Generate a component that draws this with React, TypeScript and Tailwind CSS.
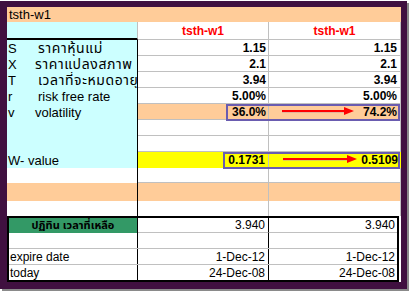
const font = { fontFamily: '"Liberation Sans", "Noto Sans Thai", "Noto Sans", Arial, sans-serif' };

type DataRow = { k: string; label: string; b: string; c: string; bg?: string; pad?: string; thai?: boolean };

const rows: DataRow[] = [
  { k: 'S', label: 'ราคาหุ้นแม่', b: '1.15', c: '1.15', pad: 'pl-[9px]', thai: true },
  { k: 'X', label: 'ราคาแปลงสภาพ', b: '2.1', c: '2.1', pad: 'pl-[6px]', thai: true },
  { k: 'T', label: 'เวลาที่จะหมดอายุ', b: '3.94', c: '3.94', pad: 'pl-[9px]', thai: true },
  { k: 'r', label: 'risk free rate', b: '5.00%', c: '5.00%', pad: 'pl-[9px]' },
  { k: 'v', label: 'volatility', b: '36.0%', c: '74.2%', bg: 'bg-[#ffcc99]', pad: 'pl-[6px]' },
  { k: '', label: '', b: '', c: '' },
  { k: '', label: '', b: '', c: '' },
];

function Arrow({ x1, x2, y }: { x1: number; x2: number; y: number }) {
  return (
    <svg className="absolute left-0 top-0 pointer-events-none" width={394} height={275}>
      <line x1={x1} y1={y + 1} x2={x2 - 8} y2={y + 1} stroke="#c9a0a0" strokeWidth={2} opacity={0.5} />
      <line x1={x1} y1={y} x2={x2 - 8} y2={y} stroke="#ff0000" strokeWidth={2} />
      <polygon points={`${x2 - 10},${y - 4} ${x2},${y} ${x2 - 10},${y + 4}`} fill="#ff0000" />
    </svg>
  );
}

export default function App() {
  return (
    <div className="w-[409px] h-[291px] bg-white overflow-hidden" style={font}>
      <div className="mt-[1px] w-[407px] h-[288px] bg-[#401040] pl-[7px] pt-[6px] shadow-[2px_2px_0_#8a8a8a]">
        <div className="relative w-[394px] h-[275px] bg-white text-black">
          {/* title */}
          <div className="h-[15px] bg-[#ffcc99] flex items-center pl-[2px] text-[13px] leading-none">tsth-w1</div>

          {/* header */}
          <div className="h-[18px] flex">
            <div className="w-[131px] bg-[#ccffff] border-b-2 border-b-black border-r border-r-[#c0c0c0]" />
            <div className="w-[131px] flex items-center justify-center border-r border-b border-[#c0c0c0] text-[12px] font-bold text-[#ff0000]">tsth-w1</div>
            <div className="w-[132px] flex items-center justify-center border-r border-b border-[#c0c0c0] text-[12px] font-bold text-[#ff0000]">tsth-w1</div>
          </div>

          {rows.map((r, i) => (
            <div key={i} className="h-[16px] flex">
              <div className="w-[131px] bg-[#ccffff] border-r border-black flex items-center text-[13px] leading-none whitespace-nowrap overflow-hidden">
                <span className="w-[22px] shrink-0 pl-[1px]">{r.k}</span>
                <span className={`${r.pad ?? ''} ${r.thai ? 'text-[14px] tracking-[0.6px]' : ''}`}>{r.label}</span>
              </div>
              <div className={`w-[131px] flex items-center justify-end pr-[2px] border-r border-b border-[#c0c0c0] text-[12px] font-bold ${r.bg ?? ''}`}>{r.b}</div>
              <div className={`w-[132px] flex items-center justify-end pr-[3px] border-r border-b border-[#c0c0c0] text-[12px] font-bold ${r.bg ?? ''}`}>{r.c}</div>
            </div>
          ))}

          {/* W value */}
          <div className="h-[16px] flex">
            <div className="w-[131px] bg-[#ccffff] border-r border-black flex items-center pl-[1px] text-[13px] leading-none">W- value</div>
            <div className="w-[131px] bg-[#ffff00] flex items-center justify-end pr-[3px] border-r border-[#c0c0c0] text-[12px] font-bold">0.1731</div>
            <div className="w-[132px] bg-[#ffff00] flex items-center justify-end pr-[3px] text-[12px] font-bold">0.5109</div>
          </div>

          <div className="h-[15px] flex">
            <div className="w-[131px] border-r border-black" />
            <div className="w-[131px] border-r border-b border-[#c0c0c0]" />
            <div className="w-[132px] border-r border-b border-[#c0c0c0]" />
          </div>
          <div className="h-[18px] flex bg-[#ffcc99]">
            <div className="w-[131px] border-r border-black" />
            <div className="w-[131px] border-r border-[#c0c0c0]" />
            <div className="w-[132px] border-r border-[#c0c0c0]" />
          </div>
          <div className="h-[15px] flex">
            <div className="w-[131px] border-r border-black" />
            <div className="w-[131px] border-r border-[#c0c0c0]" />
            <div className="w-[132px] border-r border-[#c0c0c0]" />
          </div>

          {/* bottom box */}
          <div className="w-[392px] h-[66px] border-2 border-black text-[12px]">
            <div className="h-[15px] flex">
              <div className="w-[129px] bg-[#339966] border-r border-black flex items-center justify-center font-bold text-[11px] whitespace-nowrap">ปฏิทิน เวลาที่เหลือ</div>
              <div className="w-[131px] border-r border-r-black border-b border-b-[#c0c0c0] flex items-center justify-end pr-[3px]">3.940</div>
              <div className="w-[128px] border-b border-[#c0c0c0] flex items-center justify-end pr-[2px]">3.940</div>
            </div>
            <div className="h-[16px] flex border-b border-[#c0c0c0]">
              <div className="w-[129px] border-r border-black" />
              <div className="w-[131px] border-r border-black" />
            </div>
            <div className="h-[16px] flex border-b border-[#c0c0c0]">
              <div className="w-[129px] border-r border-black flex items-center pl-[1px]">expire date</div>
              <div className="w-[131px] border-r border-black flex items-center justify-end pr-[3px]">1-Dec-12</div>
              <div className="w-[128px] flex items-center justify-end pr-[2px]">1-Dec-12</div>
            </div>
            <div className="h-[15px] flex">
              <div className="w-[129px] border-r border-black flex items-center pl-[1px]">today</div>
              <div className="w-[131px] border-r border-black flex items-center justify-end pr-[3px]">24-Dec-08</div>
              <div className="w-[128px] flex items-center justify-end pr-[2px]">24-Dec-08</div>
            </div>
          </div>

          {/* highlight boxes */}
          <div className="absolute left-[219px] top-[97px] w-[174px] h-[17px] border-2 border-[#6a5cb0]" />
          <div className="absolute left-[216px] top-[145px] w-[177px] h-[17px] border-2 border-[#6a5cb0]" />
          <Arrow x1={275} x2={347} y={104} />
          <Arrow x1={276} x2={350} y={152} />
        </div>
      </div>
    </div>
  );
}
